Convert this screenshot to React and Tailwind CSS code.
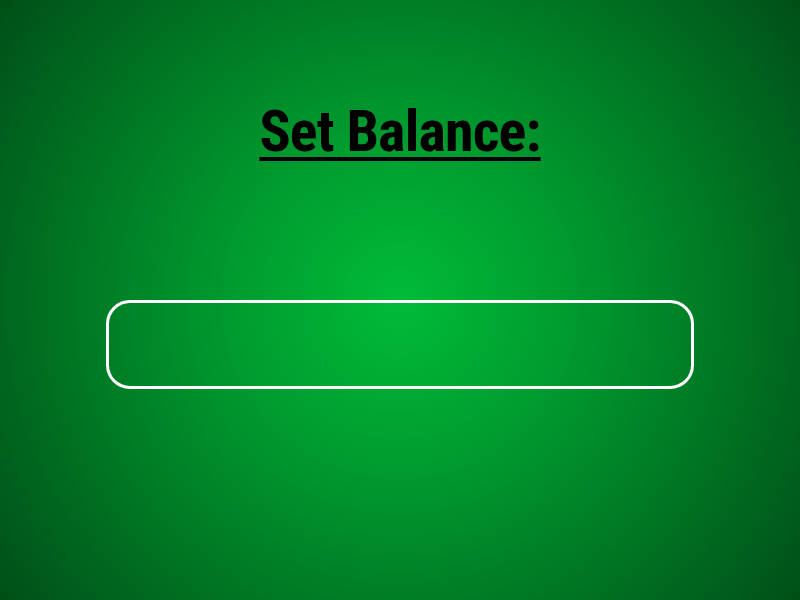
export default function App() {
  return (
    <div className="flex min-h-screen flex-col items-center bg-[radial-gradient(circle,#00bc38_0%,#009a2e_35%,#004f18_100%)] px-[106px]">
      <h1 className="mt-[96px] font-['Roboto_Condensed',sans-serif] text-[58px] leading-[70px] font-bold tracking-[-0.8px] text-black underline decoration-[4px] underline-offset-[6px]">
        Set Balance:
      </h1>
      <input
        type="text"
        className="mt-[134px] h-[89px] w-full rounded-[24px] border-[3px] border-white bg-transparent px-5 text-[32px] text-white outline-none"
      />
    </div>
  );
}
